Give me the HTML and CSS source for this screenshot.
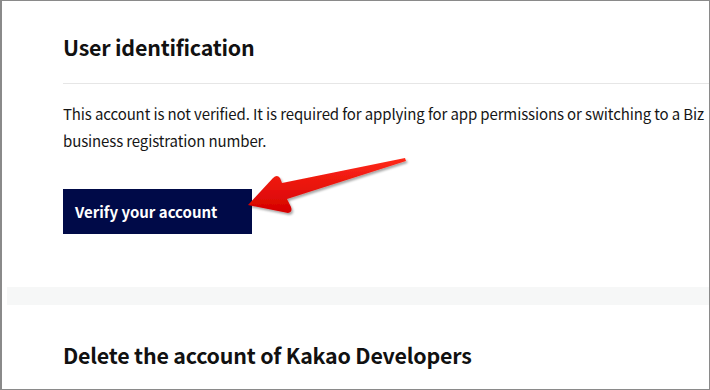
FILE: index.html
```html
<!DOCTYPE html>
<html lang="en">
<head>
<meta charset="UTF-8">
<title>Kakao Developers - Account</title>
<link rel="stylesheet" href="styles.css">
</head>
<body>

<div class="page">

  <!-- USER IDENTIFICATION -->
  <section class="card first">
    <h2 class="card-title">User identification</h2>
    <div class="divider"></div>
    <p class="desc">This account is not verified. It is required for applying for app permissions or switching to a Biz<br>business registration number.</p>
    <button class="btn-verify">Verify your account</button>
  </section>

  <div class="gap"></div>

  <!-- DELETE ACCOUNT -->
  <section class="card last">
    <h2 class="card-title">Delete the account of Kakao Developers</h2>
  </section>

  <!-- annotation arrow -->
  <svg class="arrow" width="180" height="80" viewBox="0 0 180 80">
    <defs>
      <linearGradient id="red" x1="0" y1="0" x2="0" y2="1">
        <stop offset="0" stop-color="#ff2a1a"/>
        <stop offset="1" stop-color="#d40000"/>
      </linearGradient>
      <filter id="shade" x="-10%" y="-20%" width="130%" height="160%">
        <feDropShadow dx="1.5" dy="2" stdDeviation="1.2" flood-color="#000" flood-opacity="0.35"/>
      </filter>
    </defs>
    <path d="M8 54 L33 27 Q37 23 40 27 L42 32 L165 7 L166 10 L47 48 L51 56 Q53 61 48 62 Z" fill="url(#red)" filter="url(#shade)"/>
  </svg>

</div>

</body>
</html>
```

FILE: styles.css
```css
*{box-sizing:border-box;}

html,body{
 margin:0;
 height:100%;
}

body{
 width:710px;
 height:390px;
 border:1px solid #8a8a8a;
 border-left-width:2px;
 overflow:hidden;
 background:#fff;
 font-family:"Noto Sans CJK KR","Noto Sans",sans-serif;
 color:#1e1e1e;
}

.page{
 position:relative;
 height:100%;
 padding-left:5px;
}

/* CARDS */
.card{
 background:#fff;
 padding:30px 0 0 56px;
}

.card.first{
 height:286px;
}

.card-title{
 margin:0;
 font-size:21.4px;
 font-weight:700;
 line-height:32px;
 color:#111;
 letter-spacing:-0.2px;
}

.divider{
 height:1px;
 background:#e6e6e6;
 margin:20px 0 0 0;
}

.desc{
 margin:16px 0 0 0;
 font-size:15px;
 line-height:27px;
 letter-spacing:-0.12px;
 white-space:nowrap;
 color:#161616;
}

/* BUTTON */
.btn-verify{
 display:block;
 width:189px;
 height:45px;
 margin-top:35px;
 padding:0 12px;
 border:none;
 background:#000a48;
 color:#fff;
 font-family:inherit;
 font-size:15px;
 font-weight:700;
 text-align:left;
 cursor:pointer;
}

.gap{
 height:18px;
 background:#f6f7f7;
}

.card.last{
 padding-top:34px;
}

/* ANNOTATION */
.arrow{
 position:absolute;
 left:238px;
 top:150px;
}
```
